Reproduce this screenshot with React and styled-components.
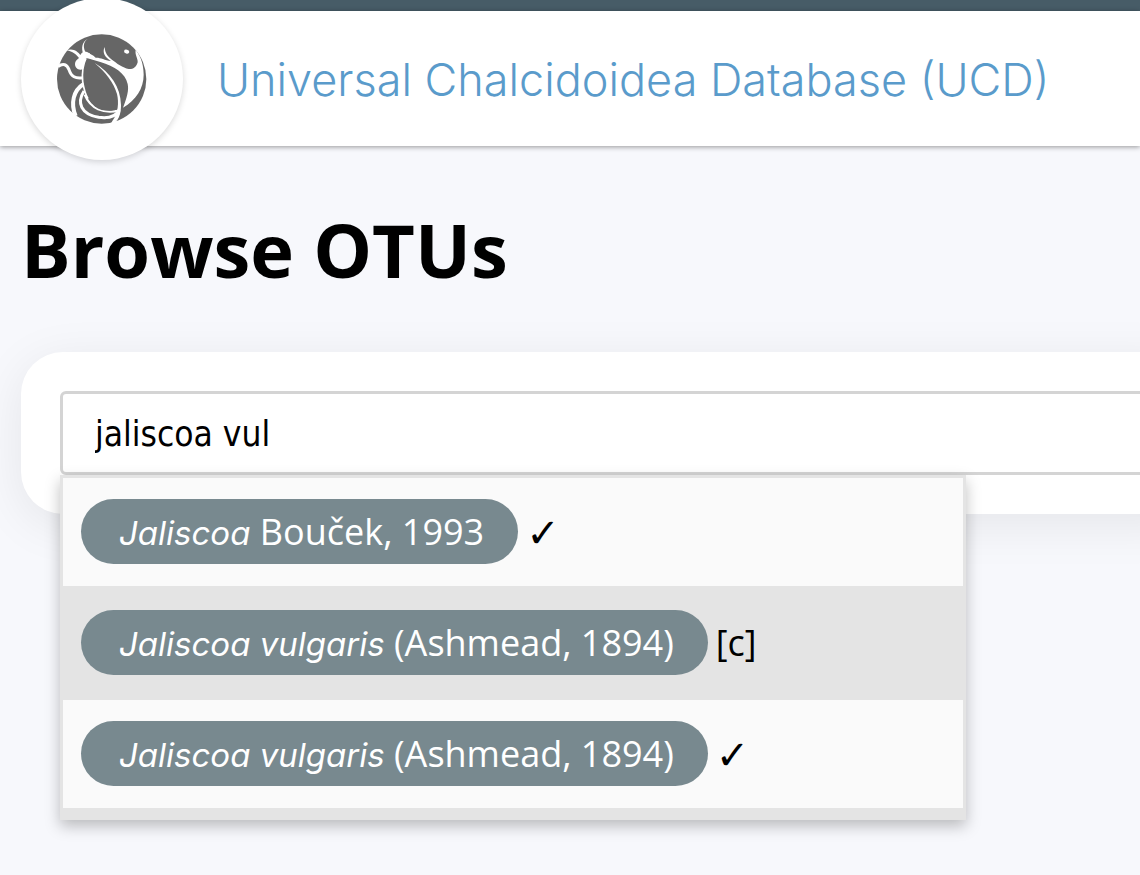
import React, { useState } from "react";
import styled, { createGlobalStyle } from "styled-components";

const GlobalStyle = createGlobalStyle`
  * {
    box-sizing: border-box;
  }
  body {
    margin: 0;
    background-color: #f7f8fc;
    color: #000;
    font-family: "Open Sans", "Noto Sans", sans-serif;
  }
`;

const Page = styled.div`
  min-height: 100vh;
  overflow: hidden;
`;

const TopBar = styled.div`
  height: 11px;
  background-color: #475c67;
`;

const Header = styled.header`
  position: relative;
  display: flex;
  align-items: center;
  gap: 34px;
  height: 135px;
  padding-left: 21px;
  background-color: #fff;
  box-shadow: 0 1px 5px rgba(0, 0, 0, 0.4);
`;

const LogoLink = styled.a`
  display: flex;
  flex: none;
  align-items: center;
  justify-content: center;
  width: 162px;
  height: 162px;
  border-radius: 50%;
  background-color: #fff;
  box-shadow: 0 2px 6px rgba(0, 0, 0, 0.15);
`;

const SiteTitle = styled.a`
  padding-top: 2px;
  color: #5a9bcb;
  font-family: Inter, "Open Sans", sans-serif;
  font-size: 45px;
  font-weight: 300;
  line-height: 64px;
  text-decoration: none;
  white-space: nowrap;
`;

const Main = styled.main`
  padding: 54px 0 56px 21px;
`;

const Heading = styled.h1`
  margin: 0 0 52px;
  font-size: 74px;
  font-weight: 700;
  line-height: 100px;
`;

const Panel = styled.section`
  margin-right: -60px;
  padding: 39px;
  border-radius: 42px;
  background-color: #fff;
  box-shadow: 0 10px 50px rgba(0, 0, 0, 0.08);
`;

const Search = styled.div`
  position: relative;
`;

const SearchInput = styled.input`
  display: block;
  width: 100%;
  height: 84px;
  padding: 2px 32px 0;
  border: 3px solid #d4d4d4;
  border-radius: 6px;
  outline: none;
  background-color: #fff;
  color: #000;
  font-family: "DejaVu Sans Condensed", "Noto Sans", sans-serif;
  font-size: 35px;
`;

const Results = styled.ul`
  position: absolute;
  top: 100%;
  left: 0;
  width: 906px;
  margin: 0;
  padding: 0 0 9px;
  border: 3px solid #e4e4e4;
  border-bottom: 0;
  background-color: #e4e4e4;
  box-shadow: 0 6px 14px rgba(0, 0, 0, 0.25);
  list-style: none;
`;

const Result = styled.li`
  display: flex;
  align-items: flex-start;
  gap: 8px;
  padding: 21px 18px 22px;
  border-bottom: 3px solid #e4e4e4;
  background-color: ${(props) => (props.$active ? "#e4e4e4" : "#fafafa")};
`;

const Pill = styled.button`
  height: 65px;
  padding: 0 34px 0 38px;
  border: 0;
  border-radius: 33px;
  background-color: #78898f;
  color: #fff;
  font-family: inherit;
  font-size: 36px;
  line-height: 65px;
  white-space: nowrap;
  cursor: pointer;
`;

const TaxonName = styled.i`
  font-family: Inter, "Open Sans", sans-serif;
  font-size: 33px;
`;

const Mark = styled.span`
  font-family: "Open Sans", "DejaVu Sans", sans-serif;
  font-size: ${(props) => (props.$valid ? "40px" : "36px")};
  line-height: 65px;
`;

const results = [
  { id: 1, name: "Jaliscoa", author: "Bouček, 1993", valid: true },
  { id: 2, name: "Jaliscoa vulgaris", author: "(Ashmead, 1894)", valid: false },
  { id: 3, name: "Jaliscoa vulgaris", author: "(Ashmead, 1894)", valid: true },
];

function Logo() {
  return (
    <svg width="105" height="105" viewBox="0 0 315 315" aria-hidden="true">
      <circle cx="155" cy="159" r="134" fill="#666" />
      <g fill="#fff">
        {/* neck and jaw */}
        <path d="M257 72C268 85 281 109 281 146C281 187 258 222 219 245C231 214 237 193 233 174C226 141 194 122 151 108L110 96L105 77C116 81 130 86 137 95C151 94 163 102 183 105C165 94 156 80 164 63C165 82 173 92 190 104C207 117 225 129 243 129C254 128 260 119 263 109C264 97 254 87 257 72Z" />
        <ellipse cx="230" cy="77" rx="8" ry="6" transform="rotate(15 230 77)" />
        {/* thorax and front leg */}
        <path d="M114 38C99 48 98 64 109 83L100 85C93 65 96 47 114 38Z" />
        <path d="M50 73C69 65 84 77 91 87C97 76 107 74 119 82L124 92L107 99L101 128C88 136 75 127 75 114C75 105 81 101 87 96C79 86 68 76 50 73Z" />
      </g>
      {/* legs */}
      <g fill="none" stroke="#fff">
        <path d="M24 122C40 110 51 116 57 131C64 153 76 158 99 155" strokeWidth="9" />
        <path d="M101 174C70 193 61 232 77 270" strokeWidth="12" />
        <path d="M102 195C80 230 92 264 146 274C174 278 198 271 208 252" strokeWidth="9" />
        <path d="M104 206C122 249 160 264 206 254" strokeWidth="7" />
      </g>
      {/* wings */}
      <path
        d="M108 97C99 119 98 142 100 166C104 208 124 244 155 252C173 256 191 255 202 250L211 200C203 156 174 115 108 97Z"
        fill="#666"
      />
      <path
        d="M108 97C97 119 96 142 98 166C101 187 106 204 114 218"
        fill="none"
        stroke="#fff"
        strokeWidth="5"
      />
      <path
        d="M134 111C166 138 192 171 201 204C207 230 205 262 187 285L181 297C207 288 213 264 213 237C212 182 181 140 134 111Z"
        fill="#fff"
      />
    </svg>
  );
}

function App() {
  const [query, setQuery] = useState("jaliscoa vul");

  return (
    <Page>
      <GlobalStyle />
      <TopBar />
      <Header>
        <LogoLink href="#" aria-label="Home">
          <Logo />
        </LogoLink>
        <SiteTitle href="#">Universal Chalcidoidea Database (UCD)</SiteTitle>
      </Header>
      <Main>
        <Heading>Browse OTUs</Heading>
        <Panel>
          <Search>
            <SearchInput
              type="text"
              aria-label="Search OTUs"
              value={query}
              onChange={(e) => setQuery(e.target.value)}
            />
            <Results>
              {results.map((item) => (
                <Result key={item.id} $active={item.id === 2}>
                  <Pill type="button">
                    <TaxonName>{item.name}</TaxonName> {item.author}
                  </Pill>
                  <Mark $valid={item.valid}>{item.valid ? "✓" : "[c]"}</Mark>
                </Result>
              ))}
            </Results>
          </Search>
        </Panel>
      </Main>
    </Page>
  );
}

export default App;
